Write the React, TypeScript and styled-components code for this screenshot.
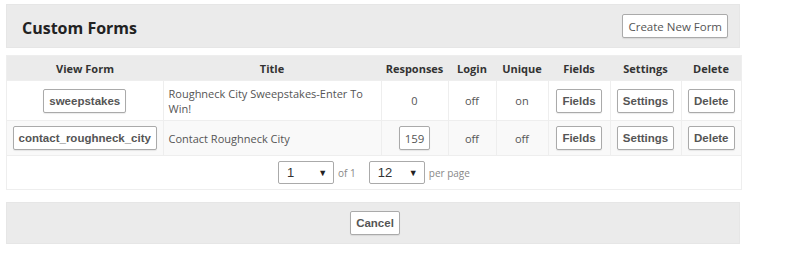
import React from "react";
import styled, { createGlobalStyle } from "styled-components";

const GlobalStyle = createGlobalStyle`
  html, body {
    margin: 0;
    padding: 0;
    background: #ffffff;
  }
  body {
    font-family: "Open Sans", "Liberation Sans", Arial, sans-serif;
    font-size: 11px;
    color: #555;
  }
`;

const Page = styled.div`
  width: 734px;
  padding: 4px 6px;
  display: flex;
  flex-direction: column;
`;

const Panel = styled.div<{ $align?: string }>`
  display: flex;
  align-items: center;
  justify-content: ${(p) => p.$align || "space-between"};
  height: 44px;
  box-sizing: border-box;
  background: #ebebeb;
  border: 1px solid #e6e6e6;
  padding: 0 11px 0 15px;
`;

const PageTitle = styled.h1`
  margin: 3px 0 0;
  font-size: 16px;
  font-weight: 700;
  color: #222;
`;

const Button = styled.button<{ $bold?: boolean }>`
  box-sizing: border-box;
  height: 24px;
  padding: 0 5px;
  background: #fff;
  border: 1px solid #aaa;
  border-radius: 2px;
  box-shadow: 0 1px 1px rgba(0, 0, 0, 0.08);
  font-family: ${(p) =>
    p.$bold ? `"Liberation Sans", Arial, sans-serif` : `"Open Sans", sans-serif`};
  font-weight: ${(p) => (p.$bold ? 700 : 400)};
  font-size: 11.5px;
  color: #555;
  cursor: pointer;
`;

const Table = styled.table`
  margin-top: 7px;
  width: 734px;
  border-collapse: collapse;
  table-layout: fixed;
  border: 1px solid #eeeeee;
`;

const HeadCell = styled.th<{ $w: number }>`
  width: ${(p) => p.$w}px;
  height: 24px;
  padding: 0;
  background: #ebebeb;
  font-size: 11px;
  font-weight: 700;
  color: #333;
  text-align: center;
`;

const Row = styled.tr<{ $alt?: boolean }>`
  background: ${(p) => (p.$alt ? "#f9f9f9" : "#ffffff")};
  height: ${(p) => (p.$alt ? 35 : 40)}px;
`;

const Cell = styled.td<{ $left?: boolean }>`
  padding: 0 ${(p) => (p.$left ? "14px 0 5px" : "3px")};
  border: 1px solid #eeeeee;
  text-align: ${(p) => (p.$left ? "left" : "center")};
  line-height: 15px;
  color: #555;
  vertical-align: middle;
`;

const PagerCell = styled.td`
  height: 33px;
  padding: 0;
  border: 1px solid #eeeeee;
  background: #fff;
`;

const Pager = styled.div`
  display: flex;
  justify-content: center;
  align-items: center;
  gap: 4px;
`;

const Select = styled.div`
  box-sizing: border-box;
  width: 56px;
  height: 23px;
  display: flex;
  align-items: center;
  justify-content: space-between;
  padding: 0 6px 0 8px;
  border: 1px solid #aaa;
  border-radius: 2px;
  background: #fff;
  font-family: "Liberation Sans", Arial, sans-serif;
  font-size: 13px;
  color: #333;
`;

const Caret = styled.span`
  font-size: 9px;
  color: #222;
`;

const PagerText = styled.span<{ $gap?: number }>`
  color: #888;
  font-size: 10px;
  margin-right: ${(p) => p.$gap || 0}px;
`;

const Footer = styled(Panel)`
  margin-top: 12px;
  height: 42px;
`;

const forms = [
  {
    slug: "sweepstakes",
    title: "Roughneck City Sweepstakes-Enter To Win!",
    responses: 0,
    login: "off",
    unique: "on",
  },
  {
    slug: "contact_roughneck_city",
    title: "Contact Roughneck City",
    responses: 159,
    login: "off",
    unique: "off",
  },
];

const columns: [string, number][] = [
  ["View Form", 156],
  ["Title", 218],
  ["Responses", 67],
  ["Login", 48],
  ["Unique", 52],
  ["Fields", 62],
  ["Settings", 71],
  ["Delete", 60],
];

export default function App() {
  return (
    <>
      <GlobalStyle />
      <Page>
        <Panel>
          <PageTitle>Custom Forms</PageTitle>
          <Button>Create New Form</Button>
        </Panel>
        <Table>
          <thead>
            <tr>
              {columns.map(([label, w]) => (
                <HeadCell key={label} $w={w}>
                  {label}
                </HeadCell>
              ))}
            </tr>
          </thead>
          <tbody>
            {forms.map((f, i) => (
              <Row key={f.slug} $alt={i % 2 === 1}>
                <Cell>
                  <Button $bold>{f.slug}</Button>
                </Cell>
                <Cell $left>{f.title}</Cell>
                <Cell>
                  {f.responses > 0 ? <Button>{f.responses}</Button> : f.responses}
                </Cell>
                <Cell>{f.login}</Cell>
                <Cell>{f.unique}</Cell>
                <Cell>
                  <Button $bold>Fields</Button>
                </Cell>
                <Cell>
                  <Button $bold>Settings</Button>
                </Cell>
                <Cell>
                  <Button $bold>Delete</Button>
                </Cell>
              </Row>
            ))}
            <tr>
              <PagerCell colSpan={8}>
                <Pager>
                  <Select>
                    1<Caret>▼</Caret>
                  </Select>
                  <PagerText $gap={9}>of 1</PagerText>
                  <Select>
                    12<Caret>▼</Caret>
                  </Select>
                  <PagerText>per page</PagerText>
                </Pager>
              </PagerCell>
            </tr>
          </tbody>
        </Table>
        <Footer $align="center">
          <Button $bold>Cancel</Button>
        </Footer>
      </Page>
    </>
  );
}
